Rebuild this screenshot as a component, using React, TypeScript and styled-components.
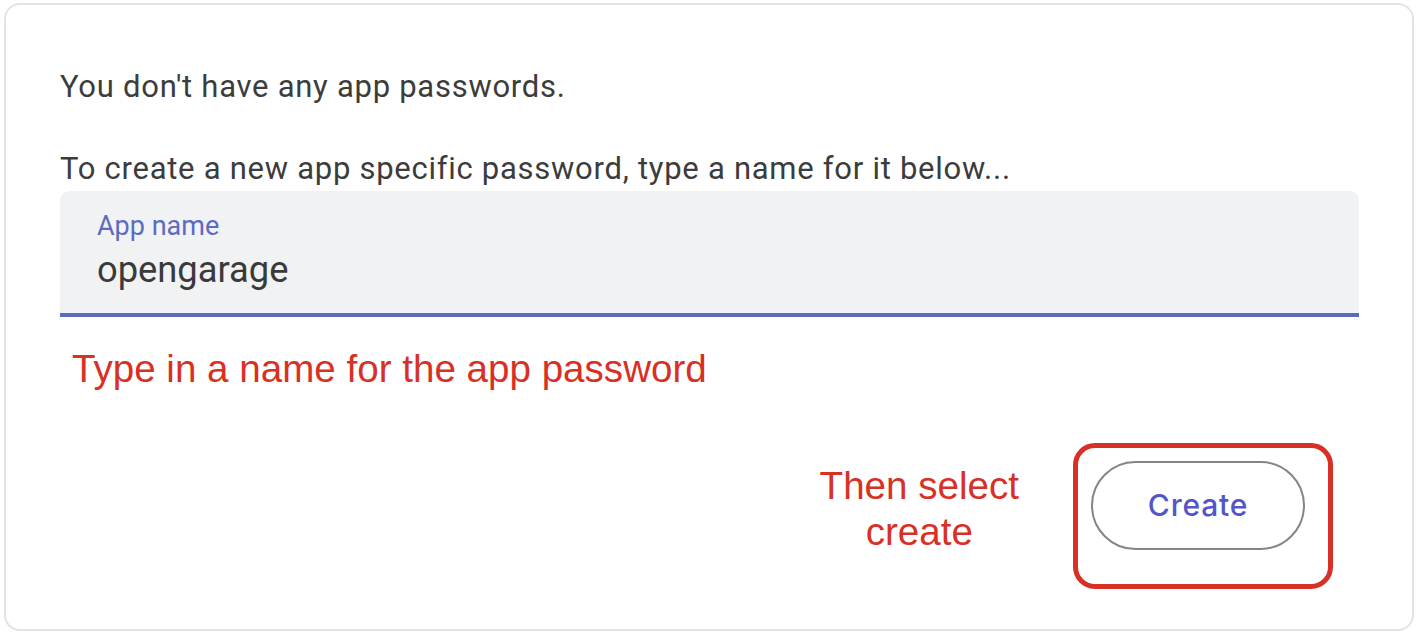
import styled, { createGlobalStyle } from "styled-components";

const GlobalStyle = createGlobalStyle`
  html, body {
    margin: 0;
    padding: 0;
    background: #ffffff;
  }
  body {
    font-family: Roboto, "Noto Sans", sans-serif;
  }
`;

const Card = styled.div`
  box-sizing: border-box;
  margin: 3px 5px 0 4px;
  height: 628px;
  border: 2px solid #e3e3e3;
  border-radius: 16px;
  background: #ffffff;
  padding: 61px 53px 0 54px;
  display: flex;
  flex-direction: column;
`;

const Message = styled.p<{ $gap?: number }>`
  margin: 0 0 ${(p) => p.$gap ?? 0}px 0;
  font-size: 31px;
  line-height: 42px;
  color: #3c3c3c;
  letter-spacing: 0.73px;
`;

const Field = styled.label`
  display: flex;
  flex-direction: column;
  gap: 6px;
  background: #f1f2f4;
  border-radius: 9px 9px 0 0;
  border-bottom: 4px solid #5c6bc0;
  padding: 19px 36px 21px 37px;
`;

const FieldLabel = styled.span`
  font-size: 27px;
  line-height: 32px;
  color: #5c6bc0;
`;

const FieldInput = styled.input`
  border: none;
  outline: none;
  background: transparent;
  padding: 0;
  margin: 0;
  font-family: Roboto, "Noto Sans", sans-serif;
  font-size: 36.3px;
  line-height: 44px;
  height: 44px;
  color: #3a3a3a;
`;

const Note = styled.div`
  font-family: "Liberation Sans", Arial, sans-serif;
  font-size: 38.6px;
  line-height: 46px;
  color: #d93025;
`;

const Hint = styled(Note)`
  margin: 29px 0 0 12px;
`;

const ActionRow = styled.div`
  margin-top: 51px;
  display: flex;
  justify-content: flex-end;
  align-items: center;
  gap: 54px;
  padding-right: 26px;
`;

const ActionNote = styled(Note)`
  text-align: center;
  margin-bottom: 14px;
`;

const Highlight = styled.div`
  border: 5px solid #d93025;
  border-radius: 22px;
  padding: 13px 23px 34px 13px;
`;

const CreateButton = styled.button`
  box-sizing: border-box;
  width: 214px;
  height: 89px;
  padding: 0 0 2px;
  border: 2px solid #858585;
  border-radius: 45px;
  background: #ffffff;
  font-family: Inter, Roboto, sans-serif;
  font-size: 30px;
  font-weight: 500;
  letter-spacing: 0.8px;
  color: #5355c9;
  cursor: pointer;
  display: block;
`;

export default function App() {
  return (
    <>
      <GlobalStyle />
      <Card>
        <Message $gap={40}>You don't have any app passwords.</Message>
        <Message $gap={1}>
          To create a new app specific password, type a name for it below...
        </Message>
        <Field>
          <FieldLabel>App name</FieldLabel>
          <FieldInput defaultValue="opengarage" />
        </Field>
        <Hint>Type in a name for the app password</Hint>
        <ActionRow>
          <ActionNote>
            Then select
            <br />
            create
          </ActionNote>
          <Highlight>
            <CreateButton>Create</CreateButton>
          </Highlight>
        </ActionRow>
      </Card>
    </>
  );
}
